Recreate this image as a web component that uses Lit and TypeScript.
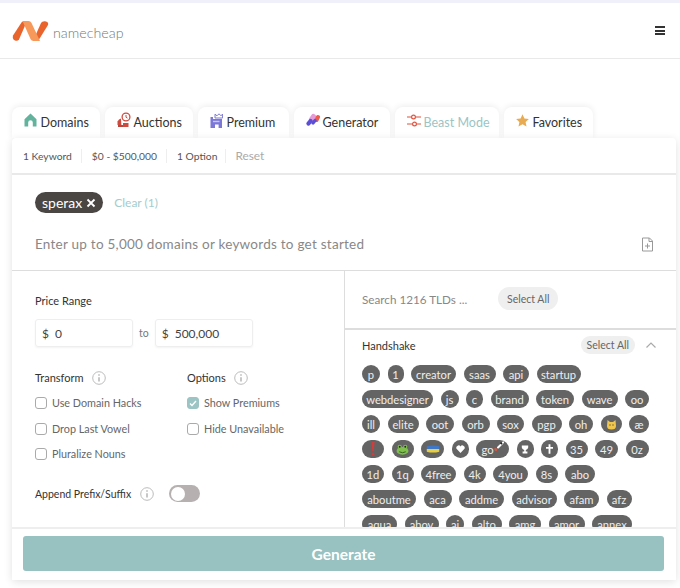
import { LitElement, html, css } from "lit";
import { customElement } from "lit/decorators.js";

const house = html`<svg width="13" height="14" viewBox="0 0 13 14"><path d="M6.500 .5 12.500 6.200V13.500H8.800V9.600a2.300 2.300 0 0 0-4.600 0v3.900H.5V6.200Z" fill="#62b29c"/></svg>`;
const auction = html`<svg width="14" height="16" viewBox="0 0 14 16"><circle cx="9" cy="5" r="3.900" fill="#fff" stroke="#cf4a3e" stroke-width="1.300"/><path d="M9 3v2.300l1.500 .8" fill="none" stroke="#cf4a3e" stroke-width="1"/><path d="M2 7.500 4 6.500 4.400 13H.5V9.500Z" fill="#cf4a3e"/><path d="M6 11h5.500v4H6Z" fill="#cf4a3e"/><path d="M4.400 13H6v2H1v-2Z" fill="#b9453c"/></svg>`;
const castle = html`<svg width="13" height="15" viewBox="0 0 13 15"><path d="M5 1.200 7 2.800 9 .8 11 2.800 12.600 1V5H5Z" fill="none" stroke="#7b78d8" stroke-width="1"/><path d="M.5 4H3V6H12V15H8.600V11.500H5V15H.5Z" fill="#7b78d8"/><path d="M3 7.800h6.500v1.400H3Z" fill="#c9c8f0"/></svg>`;
const pills = html`<svg width="14" height="14" viewBox="0 0 14 14"><path d="M5.500 6.500 7.500 3.500" stroke="#e59bd8" stroke-width="5" stroke-linecap="round"/><path d="M10.500 7 12 4" stroke="#ef5b4b" stroke-width="4" stroke-linecap="round"/><path d="M2.500 10.500 4.500 8" stroke="#5b4fd8" stroke-width="4.200" stroke-linecap="round"/><path d="M7 10 9 7.500" stroke="#5b4fd8" stroke-width="3.400" stroke-linecap="round"/></svg>`;
const sliders = html`<svg width="14" height="13" viewBox="0 0 14 13" fill="none" stroke="#e0533f" stroke-width="1.200"><path d="M0 3H4M9 3H14M0 10H5M10 10H14"/><circle cx="6.500" cy="3" r="1.900"/><circle cx="7.500" cy="10" r="1.900"/></svg>`;
const star = html`<svg width="13" height="13" viewBox="0 0 13 13"><path d="M6.500 .3 8.400 4.400 12.900 5 9.600 8 10.500 12.600 6.500 10.300 2.500 12.600 3.400 8 .1 5 4.600 4.400Z" fill="#e9ab52"/></svg>`;
const info = html`<svg class="info" width="14" height="14" viewBox="0 0 14 14" fill="none"><circle cx="7" cy="7" r="6.300" stroke="#b4b4b4" stroke-width=".9"/><path d="M7 6.200V10.400" stroke="#999" stroke-width="1.100"/><circle cx="7" cy="4.100" r=".75" fill="#999"/></svg>`;

const cat = html`<svg width="11" height="11" viewBox="0 0 11 11"><path d="M1.500 1 4 3h3L9.500 1l.5 6a4.500 3.600 0 0 1-9 0Z" fill="#f0c64c"/><circle cx="4" cy="6" r=".7" fill="#6b5a2a"/><circle cx="7" cy="6" r=".7" fill="#6b5a2a"/></svg>`;
const bang = html`<svg width="4" height="14" viewBox="0 0 4 14"><path d="M.5 0h3L2.700 9h-1.400Z" fill="#d23c3c"/><circle cx="2" cy="12" r="1.500" fill="#d23c3c"/></svg>`;
const frog = html`<svg width="13" height="11" viewBox="0 0 14 12"><ellipse cx="7" cy="7.500" rx="6.500" ry="4.200" fill="#7fbf4e"/><circle cx="4" cy="3" r="2.300" fill="#7fbf4e"/><circle cx="10" cy="3" r="2.300" fill="#7fbf4e"/><circle cx="4" cy="3" r="1" fill="#1d2b12"/><circle cx="10" cy="3" r="1" fill="#1d2b12"/><path d="M3.500 8.500q3.500 2 7 0" stroke="#2f5a1f" fill="none"/></svg>`;
const flag = html`<svg width="14" height="8" viewBox="0 0 14 9"><path d="M0 1.500Q7-.5 14 1.500V4.500H0Z" fill="#3f78c9"/><path d="M0 4.500H14V7.500Q7 9.500 0 7.500Z" fill="#e9cf3e"/></svg>`;
const heart = html`<svg width="9" height="8" viewBox="0 0 10 9"><path d="M5 9 .8 4.600A2.500 2.500 0 0 1 5 1.600 2.500 2.500 0 0 1 9.200 4.600Z" fill="#fff"/></svg>`;
const trophy = html`<svg width="8" height="9" viewBox="0 0 10 11"><path d="M1 .5h8v2.500a4 3.500 0 0 1-3 3V8h2v2.500H2V8h2V6a4 3.500 0 0 1-3-3Z" fill="#fff"/></svg>`;
const dagger = html`<svg width="7" height="10" viewBox="0 0 9 12"><path d="M3.300 0h2.400v3.300H9v2.300H5.700V12H3.300V5.600H0V3.300h3.300Z" fill="#fff"/></svg>`;
const brush = html`<svg class="brush" width="11" height="12" viewBox="0 0 13 13"><path d="M12 1 6 7" stroke="#fff" stroke-width="2.400" stroke-linecap="round"/><path d="M10.500 1.500 9 3" stroke="#222" stroke-width="2.400"/><path d="M2 7.500 5.500 9 4 11.500 1.500 10Z" fill="#e2553c"/></svg>`;

type Chip = { w: number; text?: string; icon?: unknown };
const t = (text: string, w: number): Chip => ({ text, w });
const ic = (icon: unknown, w: number, text?: string): Chip => ({ icon, w, text });
const chips: Chip[] = [
  t("p", 18), t("1", 16), t("creator", 45), t("saas", 32), t("api", 26), t("startup", 44),
  t("webdesigner", 71), t("js", 18), t("c", 17), t("brand", 38), t("token", 38), t("wave", 36), t("oo", 24),
  t("ill", 18), t("elite", 31), t("oot", 28), t("orb", 28), t("sox", 27), t("pgp", 30), t("oh", 24), ic(cat, 21), t("æ", 20),
  ic(bang, 22), ic(frog, 22), ic(flag, 23), ic(heart, 17), ic(brush, 33, "go"), ic(trophy, 17), ic(dagger, 17), t("35", 22), t("49", 23), t("0z", 23),
  t("1d", 22), t("1q", 22), t("4free", 35), t("4k", 22), t("4you", 35), t("8s", 22), t("abo", 30),
  t("aboutme", 54), t("aca", 28), t("addme", 45), t("advisor", 45), t("afam", 35), t("afz", 25),
  t("aqua", 35), t("ahoy", 34), t("ai", 18), t("alto", 30), t("amg", 32), t("amor", 36), t("annex", 40),
];

const tabs = [
  { label: "Domains", icon: house, w: 88 },
  { label: "Auctions", icon: auction, w: 88 },
  { label: "Premium", icon: castle, w: 91 },
  { label: "Generator", icon: pills, w: 96 },
  { label: "Beast Mode", icon: sliders, w: 104, active: true },
  { label: "Favorites", icon: star, w: 89 },
];

@customElement("app-root")
export class AppRoot extends LitElement {
  static styles = css`
    :host { display: block; width: 680px; height: 588px; overflow: hidden; background: #fff; font-family: Lato, "Open Sans", sans-serif; color: #333; }
    .strip { height: 3px; background: #f0f0fb; }
    header { height: 56px; box-sizing: border-box; border-bottom: 1px solid #e9e9e9; display: flex; align-items: center; padding: 0 15px 0 12px; }
    .wordmark { margin-left: 4px; font-size: 14.300px; color: #777; font-weight: 300; flex: 1; padding-top: 4px; }
    .burger { width: 10px; display: flex; flex-direction: column; gap: 1.500px; }
    .burger i { display: block; height: 2px; background: #333; }
    main { padding: 48px 4px 0 12px; }
    .tabs { display: flex; gap: 5px; height: 31px; position: relative; z-index: 1; }
    .tab { box-sizing: border-box; height: 31px; background: #fff; border-radius: 8px 8px 0 0; box-shadow: 0 -1px 6px rgba(0,0,0,.08); display: flex; align-items: center; padding: 0 0 0 12px; font-size: 12.500px; color: #333; white-space: nowrap; }
    .ico { width: 16.500px; flex: none; display: flex; margin-top: -5px; }
    .tab.active { color: #9cc4c4; }
    .card { height: 442px; background: #fff; border-radius: 4px; box-shadow: 0 2px 8px rgba(0,0,0,.12); display: flex; flex-direction: column; position: relative; z-index: 2; }
    .bar { height: 37px; flex: none; box-sizing: border-box; border-bottom: 2px solid #e9e9e9; display: flex; align-items: center; padding-left: 11px; font-size: 10.300px; color: #555; }
    .bar span + span { margin-left: 9px; padding-left: 10px; border-left: 1px solid #eee; line-height: 14px; }
    .bar .reset { color: #aaa; font-size: 11.800px; margin-left: 8px; padding-left: 9px; }
    .kw { height: 96px; flex: none; box-sizing: border-box; border-bottom: 1px solid #ddd; padding: 17px 22px 0 23px; display: flex; flex-direction: column; }
    .kwtop { display: flex; align-items: center; gap: 11px; height: 21px; }
    .tag { height: 21px; box-sizing: border-box; border-radius: 11px; background: #494644; color: #fff; display: flex; align-items: center; gap: 4px; padding: 0 7px; font-size: 14px; }
    .clear { font-size: 12px; color: #a5cccc; }
    .kwbottom { display: flex; align-items: center; justify-content: space-between; margin-top: 23px; font-size: 13.500px; color: #888; letter-spacing: .25px; }
    .cols { flex: 1; min-height: 0; display: flex; }
    .left { width: 333px; flex: none; box-sizing: border-box; padding: 23px 0 0 23px; border-right: 1px solid #ddd; }
    .right { flex: 1; min-width: 0; overflow: hidden; }
    .lbl { font-size: 11px; color: #333; line-height: 14px; display: flex; align-items: center; gap: 8px; white-space: nowrap; }
    .range { display: flex; align-items: center; gap: 6px; margin-top: 11px; font-size: 10.500px; color: #777; }
    .inp { box-sizing: border-box; width: 98px; height: 28px; border: 1px solid #eee; border-radius: 3px; box-shadow: 0 1px 2px rgba(0,0,0,.05); display: flex; gap: 6px; align-items: center; padding-left: 6px; font-size: 12px; color: #444; }
    .two { display: grid; grid-template-columns: 152px 1fr; margin-top: 24px; }
    .checks { display: flex; flex-direction: column; gap: 11.500px; margin-top: 11px; }
    .chk { display: flex; align-items: center; gap: 5px; font-size: 10.800px; line-height: 14px; color: #666; white-space: nowrap; }
    .box { box-sizing: border-box; width: 12px; height: 12px; border: 1.200px solid #aaa; border-radius: 3px; flex: none; display: flex; align-items: center; justify-content: center; }
    .box.on { background: #9cc4c4; border-color: #9cc4c4; }
    .append { display: flex; align-items: center; margin-top: 24px; height: 17px; }
    .append .lbl { font-size: 10.500px; gap: 9px; }
    .toggle { margin-left: 15px; width: 31px; height: 17px; border-radius: 9px; background: #b6b1b0; box-sizing: border-box; padding: 1.500px; display: flex; }
    .toggle i { display: block; width: 14px; height: 14px; border-radius: 50%; background: #fff; }
    .search { height: 59px; box-sizing: border-box; border-bottom: 2px solid #ddd; display: flex; align-items: center; padding-left: 17px; padding-bottom: 2px; font-size: 11.700px; color: #888; }
    .search .ph { width: 136px; white-space: nowrap; }
    .btn { height: 23px; padding: 0 9px; background: #efefef; border-radius: 12px; color: #666; font-size: 10.500px; display: flex; align-items: center; box-sizing: border-box; }
    .hs { display: flex; align-items: center; padding: 5px 0 0 17px; height: 20px; }
    .hs b { font-weight: 400; font-size: 11px; color: #333; flex: 1; }
    .hs .btn { height: 18px; padding: 0 6px; margin-right: 11px; }
    .hs svg { margin-right: 20px; }
    .list { display: flex; flex-wrap: wrap; gap: 7px 7.500px; padding: 10px 0 0 17px; width: 309px; box-sizing: border-box; }
    .chip { height: 18px; box-sizing: border-box; border-radius: 9px; background: #646464; color: #eee; font-size: 11.200px; display: flex; align-items: center; justify-content: center; white-space: nowrap; }
    .chip .brush { margin-left: -1px; margin-top: -4px; }
    .foot { height: 53px; flex: none; box-sizing: border-box; border-top: 2px solid #eee; padding: 7px 12px 0 11px; background: #fff; position: relative; z-index: 1; }
    .gen { height: 35px; border-radius: 3px; background: #98c1c1; color: #fff; font-weight: 700; font-size: 15.500px; display: flex; align-items: center; justify-content: center; }
  `;

  private chk(label: string, on = false) {
    return html`<div class="chk"><span class="box ${on ? "on" : ""}">${on ? html`<svg width="8" height="7" viewBox="0 0 8 7" fill="none"><path d="M1 3.500 3 5.500 7 1" stroke="#fff" stroke-width="1.400"/></svg>` : ""}</span>${label}</div>`;
  }

  render() {
    return html`
      <div class="strip"></div>
      <header>
        <svg width="37" height="22" viewBox="0 0 37 22">
          <path d="M1 15.500 9.500 2.500Q10.500 1 12.500 1H15L7 19.500Q5.500 21.500 3 20.500 0 19 1 15.500Z" fill="#e8642c"/>
          <path d="M36 5 27 19.500Q26 21 24 21H21L29 3Q30 1 33 1.200 37 2 36 5Z" fill="#e8642c"/>
          <path d="M10.500 1H16.500Q18.500 1 19.500 3L28 21H21.500Q19.500 21 18.500 19Z" fill="#f6995a"/>
        </svg>
        <span class="wordmark">namecheap</span>
        <div class="burger"><i></i><i></i><i></i></div>
      </header>
      <main>
        <div class="tabs">
          ${tabs.map((x) => html`<div class="tab ${x.active ? "active" : ""}" style="width:${x.w}px"><span class="ico">${x.icon}</span><span>${x.label}</span></div>`)}
        </div>
        <div class="card">
          <div class="bar"><span>1 Keyword</span><span>$0 - $500,000</span><span>1 Option</span><span class="reset">Reset</span></div>
          <div class="kw">
            <div class="kwtop">
              <div class="tag">sperax <svg width="10" height="10" viewBox="0 0 10 10"><path d="M1.500 1.500 8.500 8.500M8.500 1.500 1.500 8.500" stroke="#fff" stroke-width="1.800"/></svg></div>
              <span class="clear">Clear (1)</span>
            </div>
            <div class="kwbottom">
              <span>Enter up to 5,000 domains or keywords to get started</span>
              <svg width="13" height="15" viewBox="0 0 12 15" fill="none" stroke="#999" stroke-width="1"><path d="M1 1H8L11 4V14H1Z"/><path d="M7.500 1V4.500H11M6 6.500V11.500M3.500 9H8.500"/></svg>
            </div>
          </div>
          <div class="cols">
            <div class="left">
              <div class="lbl">Price Range</div>
              <div class="range">
                <div class="inp"><span>$</span><span>0</span></div>
                <span>to</span>
                <div class="inp"><span>$</span><span>500,000</span></div>
              </div>
              <div class="two">
                <div>
                  <div class="lbl">Transform ${info}</div>
                  <div class="checks">${this.chk("Use Domain Hacks")}${this.chk("Drop Last Vowel")}${this.chk("Pluralize Nouns")}</div>
                </div>
                <div>
                  <div class="lbl">Options ${info}</div>
                  <div class="checks">${this.chk("Show Premiums", true)}${this.chk("Hide Unavailable")}</div>
                </div>
              </div>
              <div class="append">
                <div class="lbl">Append Prefix/Suffix ${info}</div>
                <div class="toggle"><i></i></div>
              </div>
            </div>
            <div class="right">
              <div class="search"><span class="ph">Search 1216 TLDs ...</span><span class="btn">Select All</span></div>
              <div class="hs">
                <b>Handshake</b>
                <span class="btn">Select All</span>
                <svg width="10" height="6" viewBox="0 0 10 6" fill="none"><path d="M.5 5.500 5 1 9.500 5.500" stroke="#aaa" stroke-width="1.200"/></svg>
              </div>
              <div class="list">${chips.map((c) => html`<span class="chip" style="width:${c.w}px">${c.text ?? ""}${c.icon ?? ""}</span>`)}</div>
            </div>
          </div>
          <div class="foot"><div class="gen">Generate</div></div>
        </div>
      </main>
    `;
  }
}
